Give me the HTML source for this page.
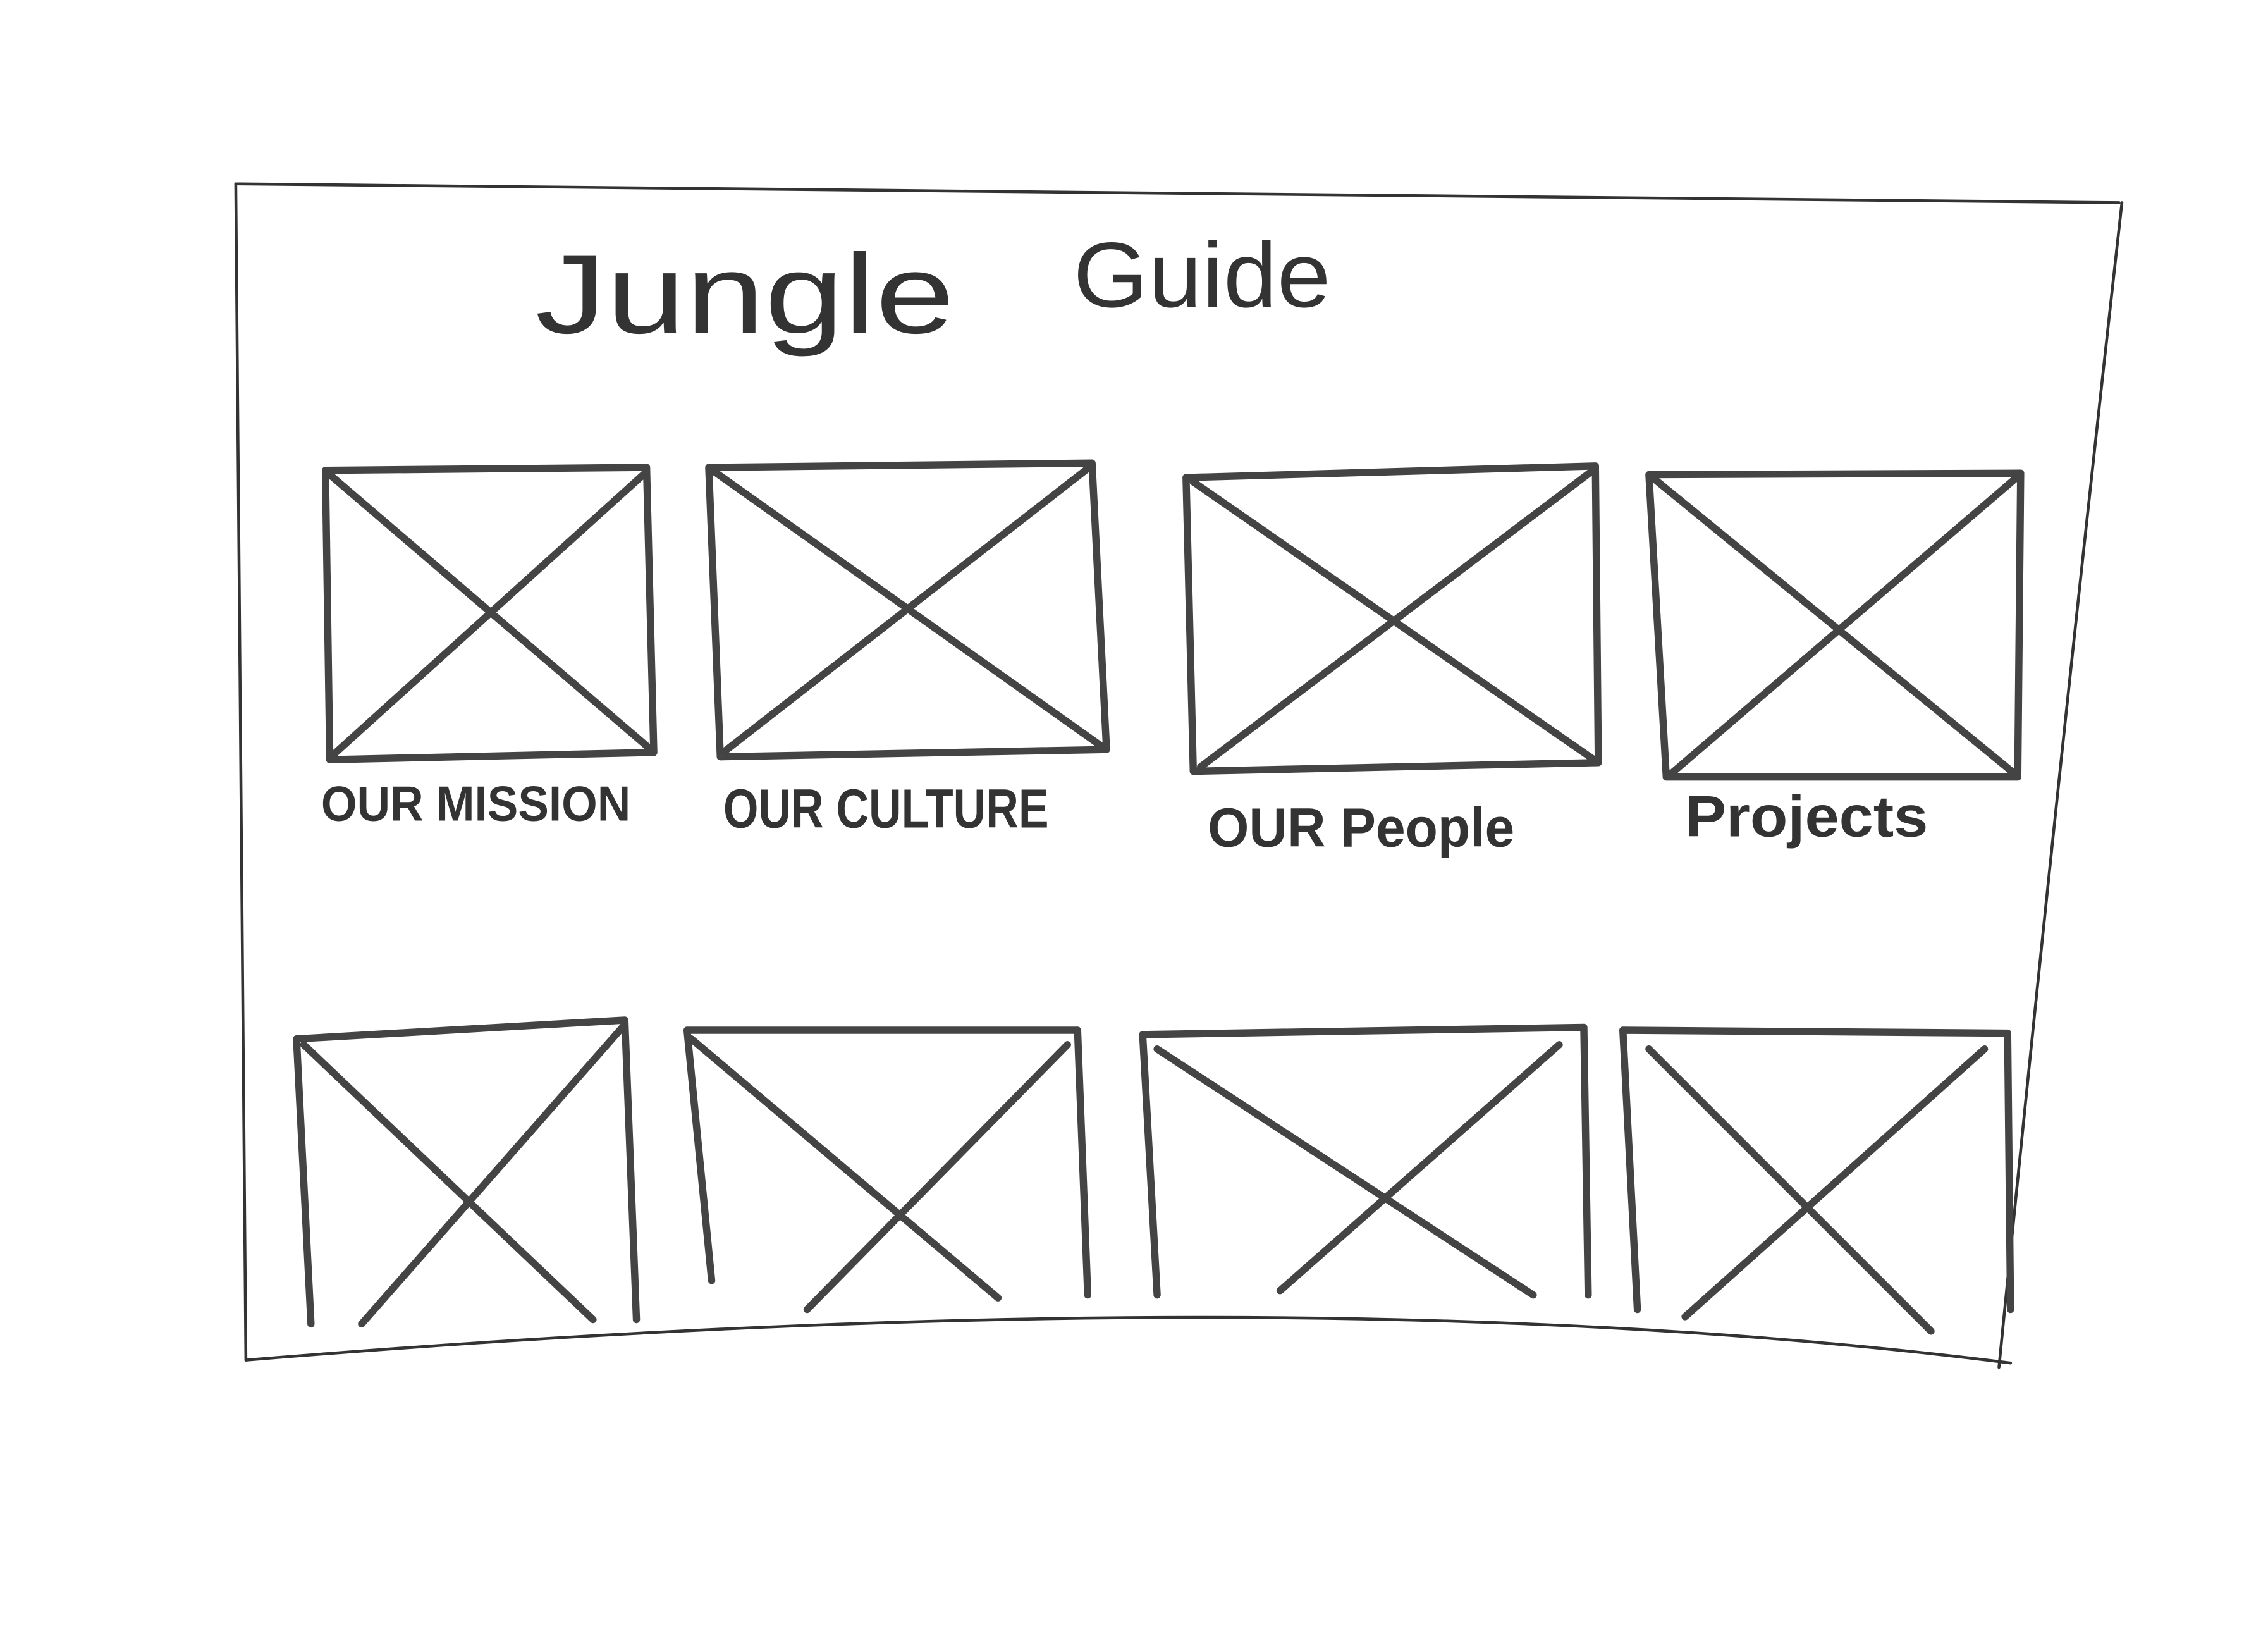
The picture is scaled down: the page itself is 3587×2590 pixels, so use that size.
<!DOCTYPE html>
<html>
<head>
<meta charset="utf-8">
<style>
html,body{margin:0;padding:0;background:#fff;}
svg{display:block;}
text{font-family:"Liberation Sans",sans-serif;fill:#333;}
</style>
</head>
<body>
<svg width="3587" height="2590" viewBox="0 0 1568 1132" xmlns="http://www.w3.org/2000/svg">
<rect width="1568" height="1132" fill="#fff"/>
<!-- outer frame -->
<g fill="none" stroke="#333" stroke-width="2" stroke-linecap="round">
<path d="M163 127 L1465 140"/>
<path d="M163 127 Q166 500 170 940"/>
<path d="M1467 140 Q1420 560 1382 945"/>
<path d="M170 940 Q900 880 1390 942"/>
</g>
<text x="370" y="230" font-size="78" font-weight="300" textLength="290" lengthAdjust="spacingAndGlyphs">Jungle</text>
<text x="742" y="212" font-size="64" font-weight="300" textLength="178" lengthAdjust="spacingAndGlyphs">Guide</text>
<g fill="none" stroke="#444" stroke-width="5" stroke-linecap="round" stroke-linejoin="round">
<!-- row 1 -->
<path d="M225 325 L447 323 L452 520 L228 525 Z"/>
<path d="M228 328 L450 518 M447 326 L230 522"/>
<path d="M490 323 L755 320 L765 518 L498 523 Z"/>
<path d="M494 326 L762 516 M753 323 L500 520"/>
<path d="M820 330 L1103 322 L1105 527 L825 533 Z"/>
<path d="M825 333 L1102 525 M1100 326 L830 530"/>
<path d="M1140 328 L1397 327 L1395 537 L1152 537 Z"/>
<path d="M1145 332 L1392 534 M1393 331 L1155 535"/>
<!-- row 2 -->
<path d="M215 915 L205 718 L432 705 L440 912"/>
<path d="M210 722 L410 912 M432 708 L250 915"/>
<path d="M492 885 L475 712 L745 712 L752 895"/>
<path d="M478 718 L690 897 M738 722 L558 905"/>
<path d="M800 895 L790 715 L1095 710 L1098 895"/>
<path d="M800 725 L1060 895 M1078 722 L885 892"/>
<path d="M1132 905 L1122 712 L1388 714 L1390 905"/>
<path d="M1140 725 L1335 920 M1372 725 L1165 910"/>
</g>
<text x="222" y="567" font-size="34" font-weight="bold" textLength="214" lengthAdjust="spacingAndGlyphs">OUR MISSION</text>
<text x="500" y="572" font-size="38" font-weight="bold" textLength="225" lengthAdjust="spacingAndGlyphs">OUR CULTURE</text>
<text x="835" y="585" font-size="38" font-weight="bold" textLength="212" lengthAdjust="spacingAndGlyphs">OUR People</text>
<text x="1165" y="578" font-size="40" font-weight="bold" textLength="168" lengthAdjust="spacingAndGlyphs">Projects</text>
</svg>
</body>
</html>
